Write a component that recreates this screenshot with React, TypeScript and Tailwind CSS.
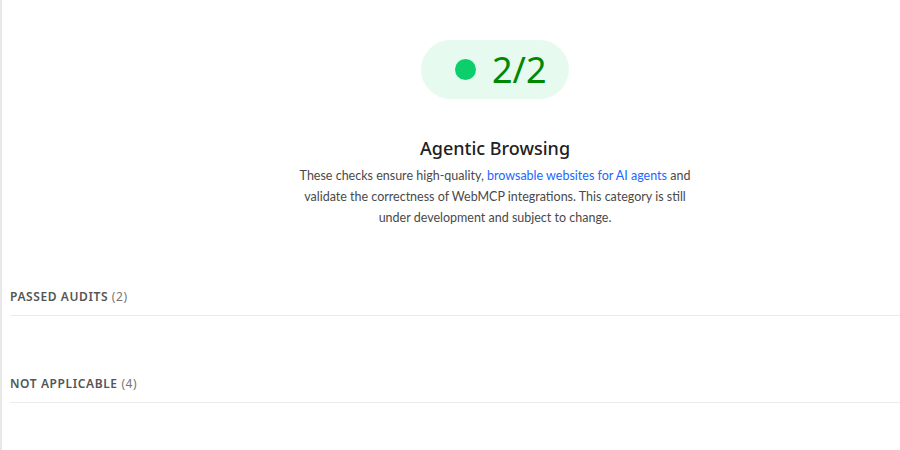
export default function App() {
  return (
    <div
      className="w-[900px] h-[450px] overflow-hidden bg-white border-l-2 border-[#e8e8e8] pl-2"
      style={{ fontFamily: '"Noto Sans", "Open Sans", sans-serif' }}
    >
      <div className="w-[970px]">
        <div className="flex flex-col items-center pt-10">
          <div className="flex items-center gap-[16px] h-[59px] w-[148px] rounded-full bg-[#e7faf0] pl-[34px]">
            <span className="block w-[21px] h-[21px] rounded-full bg-[#0cce6b]" />
            <span className="text-[36px] leading-none text-[#008800]">2/2</span>
          </div>
          <h2 className="mt-[37px] text-[18px] leading-6 font-medium text-[#212121]">Agentic Browsing</h2>
          <p
            className="mt-[5px] text-center text-[12.5px] leading-[21px] text-[#4a4a4a] whitespace-nowrap"
            style={{ fontFamily: 'Lato, "Noto Sans", sans-serif' }}
          >
            These checks ensure high-quality,{" "}
            <a className="text-[#1a66ff]">browsable websites for AI agents</a> and
            <br />
            validate the correctness of WebMCP integrations. This category is still
            <br />
            under development and subject to change.
          </p>
        </div>
        <div className="mt-[60px] border-b border-[#ebebeb] pb-[9px]">
          <div className="text-[12px] leading-[18px] font-semibold tracking-[0.05em] text-[#555]">
            PASSED AUDITS <span className="font-normal text-[#757575]">(2)</span>
          </div>
        </div>
        <div className="mt-[59px] border-b border-[#ebebeb] pb-[9px]">
          <div className="text-[12px] leading-[18px] font-semibold tracking-[0.05em] text-[#555]">
            NOT APPLICABLE <span className="font-normal text-[#757575]">(4)</span>
          </div>
        </div>
      </div>
    </div>
  );
}
